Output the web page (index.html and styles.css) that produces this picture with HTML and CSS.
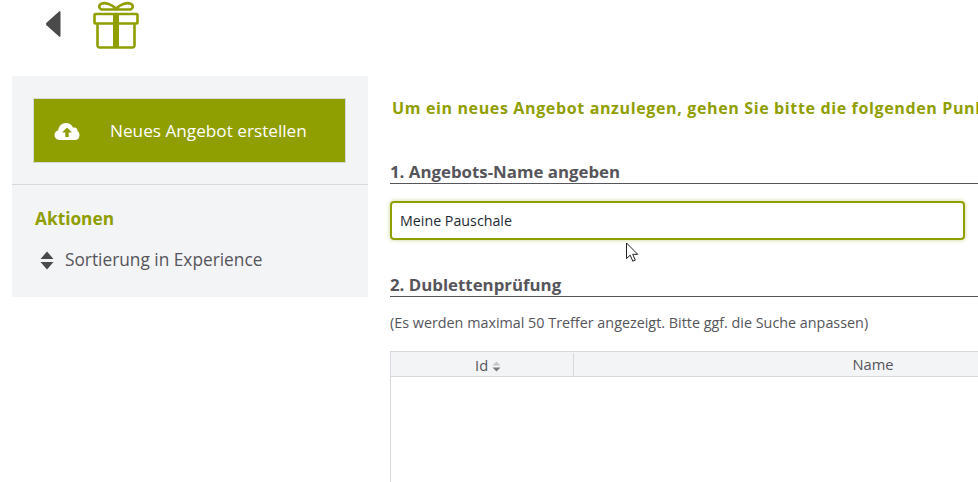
FILE: index.html
```html
<!DOCTYPE html>
<html lang="de">
<head>
<meta charset="utf-8">
<title>Neues Angebot</title>
<link rel="stylesheet" href="styles.css">
</head>
<body>
<header class="topbar">
  <svg class="back" width="18" height="28" viewBox="0 0 18 28"><path d="M15 1.500c.8-.6 1.500 0 1.500 1v23c0 1-.7 1.600-1.500 1L2.500 15.200c-.7-.7-.7-1.700 0-2.400z" fill="#4a4a4a"/></svg>
  <svg class="gift" width="48" height="50" viewBox="0 0 48 50">
    <g fill="none" stroke="#8f9e00" stroke-width="2.600">
      <path d="M24 7.500C19 3 12.500 1 9 2.800 6 4.500 7 8.500 11 8.500h26c4 0 5-4 2-5.700C35.500 1 29 3 24 7.500z"/>
      <rect x="2.500" y="13" width="43" height="9.500" rx="1"/>
      <path d="M5.500 22.500V44.500c0 1 1 2 2 2h33c1 0 2-1 2-2V22.500"/>
    </g>
    <rect x="21" y="12" width="6" height="35" fill="#8f9e00"/>
  </svg>
</header>
<div class="layout">
  <aside class="sidebar">
    <div class="sidebar-top">
      <button class="create" type="button">
        <svg class="cloud" width="26" height="20" viewBox="0 0 26 20"><path d="M6 19c-3.300 0-5.500-2.300-5.500-5 0-2.300 1.500-4.200 3.700-4.800C4.500 5.500 7.700 2 12 2c3.300 0 6 1.900 7.100 4.800.5-.2.900-.3 1.400-.2 2 .1 3 1.500 3 3.300 1.300.8 2 2.200 2 3.800C25.500 17 23.500 19 21 19z" fill="#fff"/><path d="M13 6.500l-5 5h3.300v4.500h3.400v-4.500H18z" fill="#8f9e00"/></svg>
        <span>Neues Angebot erstellen</span>
      </button>
    </div>
    <div class="actions">
      <h3>Aktionen</h3>
      <div class="action">
        <svg width="14" height="19" viewBox="0 0 14 19"><path d="M7 .5l6.500 7.500H.5zM7 18.500l6.500-7.500H.5z" fill="#4a4a4a"/></svg>
        <span>Sortierung in Experience</span>
      </div>
    </div>
  </aside>
  <main class="content">
    <h2 class="intro">Um ein neues Angebot anzulegen, gehen Sie bitte die folgenden Punkte durch</h2>
    <section class="step first">
      <h3>1. Angebots-Name angeben</h3>
      <div class="field">Meine Pauschale</div>
    </section>
    <section class="step second">
      <h3>2. Dublettenprüfung</h3>
      <p class="note">(Es werden maximal 50 Treffer angezeigt. Bitte ggf. die Suche anpassen)</p>
      <div class="grid">
        <div class="grid-head">
          <div class="col-id">Id <svg width="9" height="11" viewBox="0 0 9 11"><path d="M4.500 .5L8.500 4.500H.5z" fill="#c4c4c4"/><path d="M4.500 10.500L8.500 6.500H.5z" fill="#7a7a7a"/></svg></div>
          <div class="col-name">Name</div>
        </div>
      </div>
    </section>
  </main>
</div>
<svg class="pointer" width="16" height="22" viewBox="0 0 16 22"><path d="M1.500 1v15.500l3.700-3.300 2.600 6 2.500-1.100-2.600-5.800h5z" fill="#fff" stroke="#222" stroke-width="1"/></svg>
</body>
</html>
```
FILE: styles.css
```css
* { box-sizing: border-box; }
html, body { margin: 0; height: 482px; overflow: hidden; background: #fff; }
body {
  position: relative;
  font-family: "Open Sans", "Noto Sans", sans-serif;
  color: #55555b;
}
.topbar {
  height: 76px;
  display: flex;
  align-items: flex-start;
  padding-left: 44px;
}
.back { margin-top: 10px; }
.gift { margin-left: 30px; margin-top: 1px; }
.layout { display: flex; align-items: flex-start; padding-left: 12px; }
.sidebar { flex: 0 0 356px; height: 221px; background: #f3f4f6; }
.sidebar-top { height: 109px; padding: 22px 22px 0 21px; border-bottom: 1px solid #d5d8dc; }
.create {
  width: 313px;
  height: 65px;
  display: flex;
  align-items: center;
  padding: 0 0 0 20px;
  background: #8f9e00;
  border: 1px solid #d5d8dc;
  color: #fff;
  font: 400 17.200px "Open Sans", sans-serif;
}
.create span { margin-left: 30px; }
.actions { padding: 23px 0 0 23px; }
.actions h3 { margin: 0; font-size: 17.300px; line-height: 22px; font-weight: 700; color: #8f9e00; }
.action { display: flex; align-items: center; margin: 19px 0 0 5px; font-size: 17.300px; line-height: 22px; }
.action span { margin-left: 11px; }
.content { flex: 0 0 auto; width: 575px; margin-left: 22px; min-width: 0; }
.intro {
  margin: 21px 0 0 2px;
  width: 586px;
  overflow: hidden;
  white-space: nowrap;
  font-size: 16px;
  line-height: 22px;
  font-weight: 700;
  letter-spacing: .64px;
  color: #8f9e00;
}
.step h3 {
  margin: 0;
  width: 588px;
  height: 23px;
  border-bottom: 1px solid #55555b;
  font-size: 16.830px;
  line-height: 22px;
  font-weight: 700;
}
.first { margin-top: 42px; }
.field {
  margin-top: 17px;
  height: 39px;
  padding-left: 8px;
  border: 2px solid #8f9e00;
  border-radius: 4px;
  box-shadow: 0 0 4px rgba(143, 158, 0, .45);
  font-size: 14.250px;
  line-height: 35px;
  color: #1f2933;
}
.second { margin-top: 34px; }
.note { margin: 16px 0 0; font-size: 14.350px; line-height: 20px; white-space: nowrap; }
.grid { margin-top: 18px; width: 800px; height: 140px; border: solid #d5d8dc; border-width: 1px 0 0 1px; }
.grid-head {
  display: flex;
  height: 25px;
  background: #f3f4f6;
  border-bottom: 1px solid #d5d8dc;
  font-size: 14.700px;
  line-height: 24px;
  text-align: center;
}
.col-id { flex: 0 0 183px; padding-left: 12px; border-right: 1px solid #d5d8dc; margin-top: 1px; }
.col-id svg { vertical-align: -1px; }
.col-name { flex: 0 0 598px; margin-left: 0; }
.pointer { position: absolute; left: 625px; top: 242px; }
```
